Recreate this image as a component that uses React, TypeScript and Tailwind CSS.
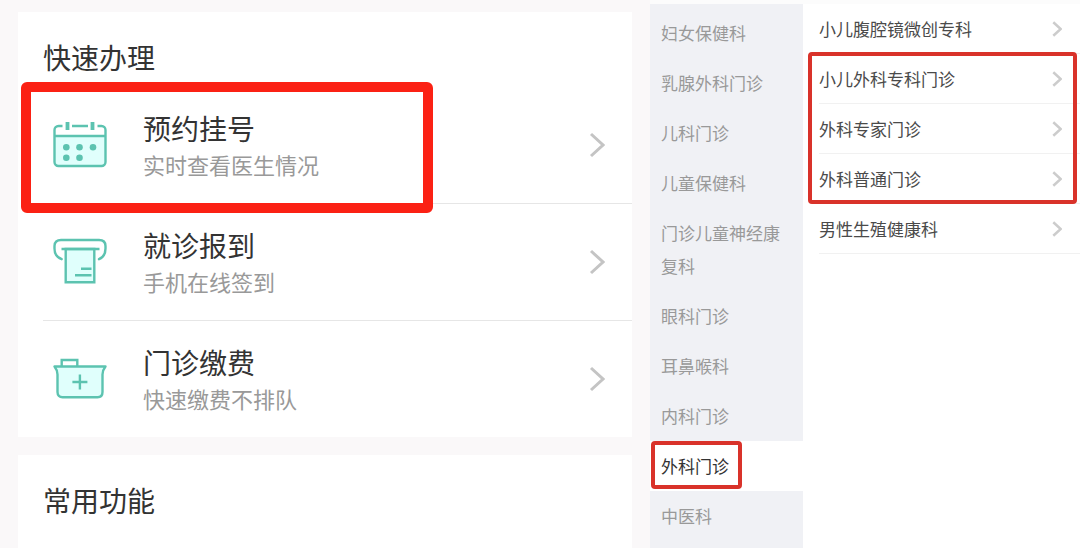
import type { ReactNode } from 'react';

const departments = [
    '妇女保健科',
    '乳腺外科门诊',
    '儿科门诊',
    '儿童保健科',
    '门诊儿童神经康复科',
    '眼科门诊',
    '耳鼻喉科',
    '内科门诊',
    '外科门诊',
    '中医科',
];

function CalendarIcon() {
    return (
        <svg viewBox="0 0 56 56" className="h-14 w-14" fill="none" stroke="#5cc3b0" strokeWidth="2.4" aria-hidden="true">
            <path d="M3 19h50v26a4 4 0 0 1-4 4H7a4 4 0 0 1-4-4z" fill="#e0fffc" stroke="none" />
            <path d="M10.500 9H6.500A4 4 0 0 0 2.500 13v32a4 4 0 0 0 4 4h43a4 4 0 0 0 4-4V13a4 4 0 0 0-4-4h-4M20 9h16M2.500 19h51" />
            <path d="M15.500 5v8M40.500 5v8" strokeWidth="3.800" />
            <g fill="#5cc3b0" stroke="none">
                <circle cx="14.300" cy="30.200" r="3.300" />
                <circle cx="27.500" cy="30.200" r="3.300" />
                <circle cx="41" cy="30.200" r="3.300" />
                <circle cx="14.300" cy="40.700" r="3.300" />
                <circle cx="27.500" cy="40.700" r="3.300" />
            </g>
        </svg>
    );
}

function TicketIcon() {
    return (
        <svg viewBox="0 0 56 56" className="h-14 w-14" fill="none" stroke="#5cc3b0" strokeWidth="2.4" aria-hidden="true">
            <path d="M9.700 25.200C5 23.500 2.500 19.500 2.500 14.500V12C2.500 8 5 6 9 6h38c4 0 6.500 2 6.500 6v2.500c0 5-2.500 9-6.500 10.700" strokeLinecap="round" />
            <path d="M13.700 15h28.600v33.200H13.700z" fill="#e0fffc" />
            <path d="M9.500 15h38M29 34.700h10.500M23 41.200h16.500" />
        </svg>
    );
}

function MedicalBagIcon() {
    return (
        <svg viewBox="0 0 56 56" className="h-14 w-14" fill="none" stroke="#5cc3b0" strokeWidth="2.4" aria-hidden="true">
            <path d="M2.500 15.500h51c-2 2.500-3 5-3 8V41c0 3.500-2 5.300-5 5.300H10.500c-3 0-5-1.800-5-5.300V23.500c0-3-1-5.500-3-8z" fill="#e0fffc" strokeLinejoin="round" />
            <path d="M9.700 15.500V9h15.600v6.500M27.900 23.500v15M20.400 31h15" />
        </svg>
    );
}

function Chevron({ className }: { className: string }) {
    return (
        <svg viewBox="0 0 16 26" className={`shrink-0 ${className}`} fill="none" stroke="currentColor" aria-hidden="true">
            <path d="M2 2l12 11L2 24" />
        </svg>
    );
}

function ServiceRow({ icon, title, hint, marked }: { icon: ReactNode; title: string; hint: string; marked?: boolean }) {
    return (
        <li className="relative border-b border-[#e6e6e6] last:border-b-0">
            <button className="flex h-[116px] w-full cursor-pointer items-center pl-[9px] pr-[27px] text-left">
                {icon}
                <span className="ml-[35px] flex flex-1 flex-col pt-0.5">
                    <span className="text-[28px] leading-9 text-[#333]">{title}</span>
                    <span className="text-[22px] leading-9 text-[#999]">{hint}</span>
                </span>
                <Chevron className="h-[26px] w-4 stroke-3 text-[#c4c4c4]" />
            </button>
            {marked && (
                <span className="pointer-events-none absolute -bottom-[10px] -left-[22px] -top-[5px] right-[199px] rounded-md border-[10px] border-[#fb2114]" />
            )}
        </li>
    );
}

function ClinicRow({ name }: { name: string }) {
    return (
        <li className="ml-4 border-b border-[#f1f1f1]">
            <button className="flex h-[49px] w-full cursor-pointer items-center justify-between pr-[18px] text-left text-[17px] text-[#4a4a4a]">
                {name}
                <Chevron className="h-4 w-[10px] stroke-[4] text-[#cccccc]" />
            </button>
        </li>
    );
}

export default function App() {
    return (
        <div className="grid min-h-screen grid-cols-[650fr_430fr] bg-white font-['Noto_Sans_CJK_SC',sans-serif]">
            <main className="flex flex-col gap-[18px] bg-[#faf8f9] px-[18px] pt-3">
                <section className="bg-white pl-[25px]">
                    <h2 className="pb-2 pt-6 text-[28px] leading-[43px] text-[#333]">快速办理</h2>
                    <ul>
                        <ServiceRow icon={<CalendarIcon />} title="预约挂号" hint="实时查看医生情况" marked />
                        <ServiceRow icon={<TicketIcon />} title="就诊报到" hint="手机在线签到" />
                        <ServiceRow icon={<MedicalBagIcon />} title="门诊缴费" hint="快速缴费不排队" />
                    </ul>
                </section>
                <section className="flex-1 bg-white pl-[25px]">
                    <h2 className="pt-6 text-[28px] leading-[43px] text-[#333]">常用功能</h2>
                </section>
            </main>

            <div className="flex border-t-4 border-[#fcfcfc]">
                <nav className="w-[153px] shrink-0 bg-[#f0f1f5] pt-1">
                    {departments.map((name) => {
                        const isActive = name === '外科门诊';

                        return (
                            <button
                                key={name}
                                className={`relative block w-full cursor-pointer pb-[9px] pl-[11px] pr-4 pt-2 text-left text-[17px] leading-[33px] ${isActive ? 'bg-white text-[#333]' : 'text-[#999]'
                                    }`}
                            >
                                {name}
                                {isActive && (
                                    <span className="pointer-events-none absolute bottom-0.5 left-px top-0 w-[91px] rounded-sm border-4 border-[#d9322a]" />
                                )}
                            </button>
                        );
                    })}
                </nav>

                <div className="flex-1">
                    <ul>
                        <ClinicRow name="小儿腹腔镜微创专科" />
                    </ul>
                    <div className="relative">
                        <ul>
                            <ClinicRow name="小儿外科专科门诊" />
                            <ClinicRow name="外科专家门诊" />
                            <ClinicRow name="外科普通门诊" />
                        </ul>
                        <span className="pointer-events-none absolute -top-0.5 bottom-0 left-[5px] right-[3px] rounded-sm border-4 border-[#d9322a]" />
                    </div>
                    <ul>
                        <ClinicRow name="男性生殖健康科" />
                    </ul>
                </div>
            </div>
        </div>
    );
}
